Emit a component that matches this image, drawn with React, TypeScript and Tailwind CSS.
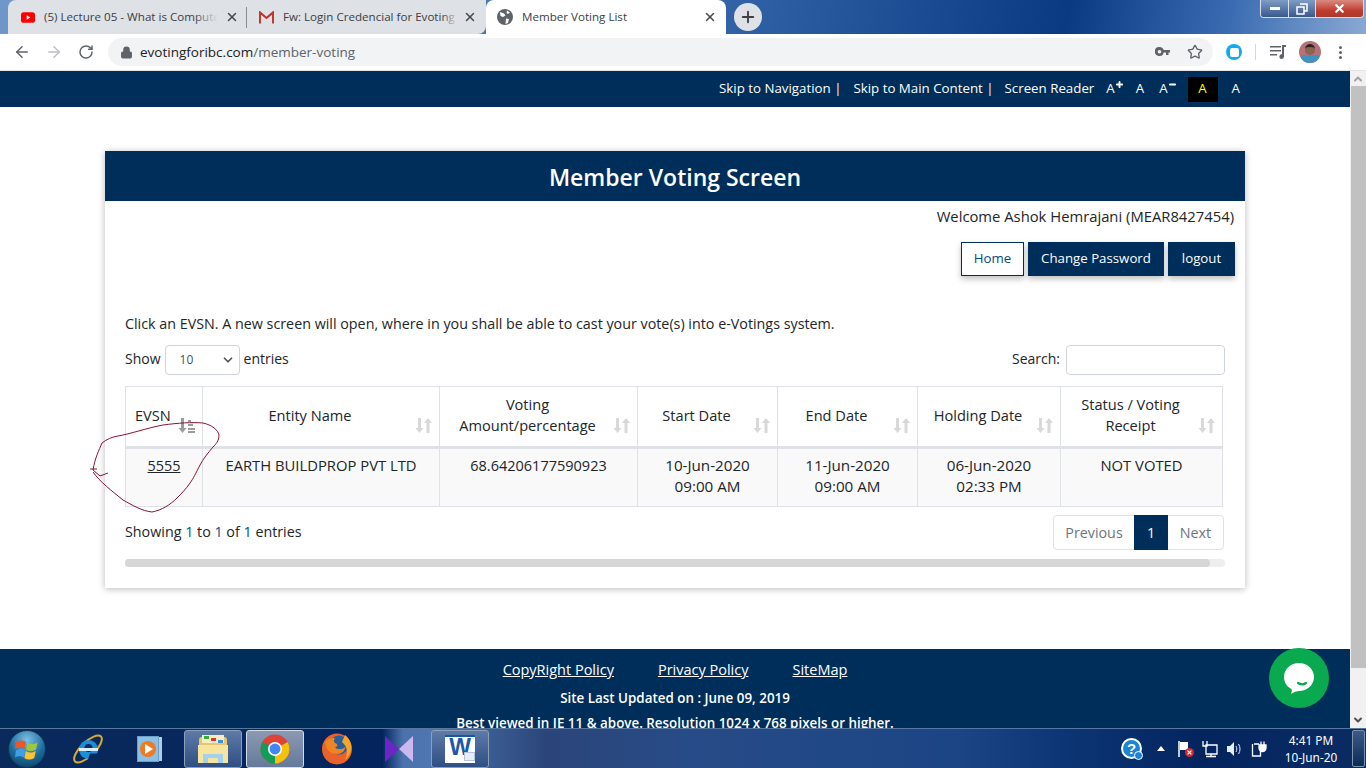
import React from 'react';
import { ArrowLeft, ArrowRight, RotateCw, Lock, Star, Plus, X, ChevronDown, ChevronUp, Minus } from 'lucide-react';

const FONT = "font-['Open_Sans','Noto_Sans',sans-serif]";

const SortIcon = ({ active }: { active?: boolean }) => (
  <span className={`absolute right-[7px] bottom-[12px] ${active ? 'text-[#9c9c9c]' : 'text-[#d8d8d8]'}`}>
    <svg width="17" height="17" viewBox="0 0 17 17" fill="currentColor" className="block">
      <path d="M3 1h3v10h2.500L4.500 16 .5 11H3z" />
      {active ? (
        <path d="M10 3h3v2h-3zM10 7h5v2h-5zM10 11h7v2h-7zM10 14h7v2h-7z" />
      ) : (
        <path d="M13 1l4 5h-2.500v10h-3V6H9z" />
      )}
    </svg>
  </span>
);

const COLS = ['w-[77px]', 'w-[237px]', 'w-[198px]', 'w-[140px]', 'w-[140px]', 'w-[143px]', 'w-[162px]'];

const HEADERS = ['EVSN', 'Entity Name', 'Voting Amount/percentage', 'Start Date', 'End Date', 'Holding Date', 'Status / Voting Receipt'];

const ROW: { cell: React.ReactNode; size: string }[] = [
  { cell: <a className="underline text-[#212529]">5555</a>, size: 'text-[14.400px]' },
  { cell: 'EARTH BUILDPROP PVT LTD', size: 'text-[14.800px]' },
  { cell: '68.64206177590923', size: 'text-[14.500px]' },
  { cell: <>10-Jun-2020<br />09:00 AM</>, size: 'text-[15.200px]' },
  { cell: <>11-Jun-2020<br />09:00 AM</>, size: 'text-[15.200px]' },
  { cell: <>06-Jun-2020<br />02:33 PM</>, size: 'text-[15.200px]' },
  { cell: 'NOT VOTED', size: 'text-[14.800px]' },
];

const ChromeLogo = () => (
  <svg width="30" height="32" viewBox="0 0 32 32">
    <circle cx="16" cy="16" r="15.500" fill="#db4437" />
    <path d="M16 16 L29.500 8.500 A15.500 15.500 0 0 1 16 31.500z" fill="#f4c20d" />
    <path d="M16 16 L16 31.500 A15.500 15.500 0 0 1 2.500 8.500z" fill="#0f9d58" />
    <circle cx="16" cy="16" r="7.500" fill="#fff" />
    <circle cx="16" cy="16" r="5.800" fill="#4285f4" />
  </svg>
);

const TaskButton = ({ children, bright }: { children: React.ReactNode; bright?: boolean }) => (
  <div className={`w-[58px] h-[38px] rounded-[3px] border flex items-center justify-center ${bright ? 'border-[#d5dce6] bg-[linear-gradient(180deg,#8b9ab3,#66799a)]' : 'border-[#8d9fb9] bg-[linear-gradient(180deg,#5d7aa8,#2f4f83)]'}`}>
    {children}
  </div>
);

const Taskbar = () => (
  <div className="h-[40px] shrink-0 flex items-center border-t border-[#5a789f] bg-[linear-gradient(90deg,#0a2a5c_0%,#04245e_27%,#04245e_28%,#4b72ad_29.500%,#4f76b0_31.500%,#3a5c92_36%,#2b4579_40%,#274b87_50%,#1c4585_70%,#0c3575_78%,#04245e_88%,#0a2c63_100%)]">
    {/* start orb */}
    <div className="ml-[8px] w-[38px] h-[38px] rounded-full bg-[radial-gradient(circle_at_50%_25%,#7cc0e2,#1b6a9e_55%,#0a3656)] border border-[#16364f] flex items-center justify-center">
      <svg width="24" height="22" viewBox="0 0 24 22">
        <path d="M1 4c3-2 7-2 10 0l-1.500 7c-3-2-6-2-9.500 0z" fill="#e9572b" />
        <path d="M12.500 4.500c3 2 6 2 10 0L21 11.500c-4 2-7 2-10 0z" fill="#9cc83c" />
        <path d="M0 12.500c3.500-2 6-2 9.500 0L8 19.500c-3-2-6-2-9 0z" transform="translate(1)" fill="#3ea0e4" />
        <path d="M10.800 13c3 2 6 2 10 0l-1.500 7c-4 2-7 2-10 0z" fill="#fcc22f" />
      </svg>
    </div>
    {/* IE */}
    <div className="ml-[26px] w-[32px] flex justify-center">
      <svg width="32" height="32" viewBox="0 0 32 32">
        <ellipse cx="16" cy="16" rx="18" ry="7" fill="none" stroke="#d9a92f" strokeWidth="2" transform="rotate(-44 16 16)" />
        <circle cx="16.500" cy="16.500" r="9.500" fill="#1c8ed8" />
        <circle cx="16.500" cy="15" r="4" fill="#0a2a5c" />
        <rect x="7" y="15" width="19" height="3" fill="#d9f0fb" />
        <path d="M18 20.500h8.500L24 26l-8 .5z" fill="#0a2a5c" />
      </svg>
    </div>
    {/* media player */}
    <div className="ml-[33px] w-[26px] h-[26px] flex">
      <div className="w-[22px] h-[26px] bg-[#8dbfe4] border border-[#6ca0c8] flex items-center justify-center">
        <div className="w-[16px] h-[16px] rounded-full bg-[#ee7a22] flex items-center justify-center">
          <div className="w-0 h-0 border-y-[5px] border-y-transparent border-l-[8px] border-l-white ml-[2px]" />
        </div>
      </div>
      <div className="w-[3px] h-[24px] mt-[1px] bg-[#a9cfea]" />
    </div>
    {/* explorer */}
    <div className="ml-[21px]">
      <TaskButton>
        <svg width="32" height="32" viewBox="0 0 32 32">
          <path d="M2 7c0-2 1-3 3-3h22c2 0 3 1 3 3v22H2z" fill="#e6c670" />
          <rect x="5" y="2" width="22" height="8" fill="#f8ecc0" />
          <rect x="7" y="3" width="5" height="3" fill="#35b13a" />
          <rect x="14" y="5" width="5" height="3" fill="#d2392f" />
          <rect x="21" y="7" width="5" height="3" fill="#3a8fe0" />
          <path d="M1 12h30v18H1z" fill="#f7e49f" />
          <path d="M6 21h20v9h-5v-5H11v5H6z" fill="#a3d3ea" />
        </svg>
      </TaskButton>
    </div>
    {/* chrome */}
    <div className="ml-[4px]">
      <TaskButton bright><ChromeLogo /></TaskButton>
    </div>
    {/* firefox */}
    <div className="ml-[18px] w-[30px] flex justify-center">
      <svg width="30" height="32" viewBox="0 0 30 32">
        <ellipse cx="15" cy="16" rx="15" ry="15.500" fill="#e8622a" />
        <circle cx="17" cy="12" r="9.500" fill="#27609f" />
        <path d="M23 2c5 4 7 9 6 15-1 4-3 8-6 10 3-6 3-13-3-18z" fill="#f6a623" />
        <path d="M3 9c1 8 5 12 12 12 5 0 8-3 8-7-3 3-8 3-10 0 2 0 3-2 2-3-3-1-4-3-2-6C8 5 5 6 3 9z" fill="#f08423" />
      </svg>
    </div>
    {/* visual studio */}
    <div className="ml-[33px] w-[28px] flex justify-center">
      <svg width="28" height="26" viewBox="0 0 28 26">
        <path d="M0 0l14 13L0 26z" fill="#6a26c4" />
        <path d="M28 0L14 13l14 13z" fill="#cbb8f0" />
      </svg>
    </div>
    {/* word */}
    <div className="ml-[18px]">
      <TaskButton>
        <div className="relative w-[30px] h-[28px] bg-white flex justify-center border-t-2 border-[#1a56a8]">
          <span className="text-[#1d57a8] text-[23px] leading-[20px] font-bold font-['Liberation_Sans',sans-serif]">W</span>
          <div className="absolute right-0 bottom-[2px] w-[11px] h-[9px] bg-[#e8edf5] border border-[#b6c4d8]" />
        </div>
      </TaskButton>
    </div>

    {/* tray */}
    <div className="ml-auto flex items-center">
      <div className="relative w-[21px] h-[21px] rounded-full bg-[#1b84d6] border-2 border-white flex items-center justify-center text-white text-[15px] font-bold leading-none font-['Liberation_Sans',sans-serif]">
        ?
        <span className="absolute -right-[3px] -bottom-[3px] w-[9px] h-[9px] rounded-full bg-[#1b84d6] border border-white" />
      </div>
      <div className="ml-[15px] w-0 h-0 border-x-[4px] border-x-transparent border-b-[5px] border-b-white" />
      <svg className="ml-[12px]" width="18" height="18" viewBox="0 0 18 18">
        <path d="M2 1v16" stroke="#fff" strokeWidth="1.500" />
        <path d="M3 2h8v8H3z" fill="#fff" />
        <circle cx="12.500" cy="12.500" r="4.500" fill="#d8262c" />
        <path d="M10.600 10.600l3.800 3.800M14.400 10.600l-3.800 3.800" stroke="#fff" strokeWidth="1.300" />
      </svg>
      <svg className="ml-[7px]" width="16" height="18" viewBox="0 0 16 18" fill="none" stroke="#fff" strokeWidth="1.300">
        <path d="M4 5h11v9H4zM1 1v5h4V1M9 14v2M4 16.500h10" />
      </svg>
      <svg className="ml-[8px]" width="16" height="18" viewBox="0 0 16 18">
        <path d="M1 6h3l4-4v14l-4-4H1z" fill="#e8eef6" />
        <path d="M10 6c1 2 1 4 0 6M12.500 4c2 3 2 7 0 10" stroke="#e8eef6" fill="none" />
      </svg>
      <svg className="ml-[9px]" width="16" height="18" viewBox="0 0 16 18" fill="none" stroke="#fff" strokeWidth="1.300">
        <path d="M3 4h5M1.500 4v12h8v-6" />
        <path d="M8 5h7v3a3.500 3.500 0 0 1-7 0zM10 1.500V5M13 1.500V5" fill="#fff" />
      </svg>
      <div className="ml-[14px] w-[60px] text-center text-white text-[11.800px] leading-[17px] font-['Noto_Sans',sans-serif]">
        <div>4:41 PM</div>
        <div>10-Jun-20</div>
      </div>
      <div className="ml-[11px] mr-[1px] w-[13px] h-[37px] border border-[#7f93ad] rounded-[2px] bg-[linear-gradient(180deg,#3c5a85,#0d2b59)]" />
    </div>
  </div>
);

const Btn = ({ children, outline, width }: { children: React.ReactNode; outline?: boolean; width: string }) => (
  <span className={`h-[34px] ${width} flex items-center justify-center text-[13.250px] shadow-[0_3px_6px_rgba(0,0,0,0.25)] ${outline ? 'bg-white border border-[#002e5b] text-[#004a80]' : 'bg-[#002e5b] text-white'}`}>
    {children}
  </span>
);

export default function App() {
  return (
    <div className={`w-[1366px] h-[768px] overflow-hidden flex flex-col bg-white relative ${FONT}`}>
      {/* tab strip */}
      <div className="h-[34px] shrink-0 flex items-stretch bg-[linear-gradient(100deg,#6f97c9_0%,#3f70b3_45%,#0a3a82_78%,#3b6cb2_90%,#8aa9d3_100%)]">
        <div className="w-[8px]" />
        <div className="w-[239px] bg-[#dee1e6] rounded-tl-[8px] flex items-center pl-[13px] pr-[8px] relative">
          <svg width="14" height="11" viewBox="0 0 16 12" className="shrink-0"><rect width="16" height="12" rx="3" fill="#f00" /><path d="M6.500 3.500v5l4-2.500z" fill="#fff" /></svg>
          <span className="relative ml-[9px] w-[174px] overflow-hidden whitespace-nowrap text-[11.600px] text-[#3c4043]">
            (5) Lecture 05 - What is Computer
            <span className="absolute right-0 top-0 bottom-0 w-[24px] bg-[linear-gradient(90deg,rgba(222,225,230,0),#dee1e6)]" />
          </span>
          <X size={14} strokeWidth={2.500} className="ml-auto text-[#45484c] shrink-0" />
          <span className="absolute right-0 top-[7px] h-[21px] w-px bg-[#8a8d91]" />
        </div>
        <div className="w-[239px] bg-[#dee1e6] rounded-br-[8px] flex items-center pl-[12px] pr-[9px]">
          <svg width="15" height="13" viewBox="0 0 16 13" className="shrink-0"><path d="M1 13V1l7 6 7-6v12" fill="none" stroke="#c5352b" strokeWidth="2.200" /></svg>
          <span className="relative ml-[9px] w-[175px] overflow-hidden whitespace-nowrap text-[11.600px] text-[#3c4043]">
            Fw: Login Credencial for Evoting
            <span className="absolute right-0 top-0 bottom-0 w-[16px] bg-[linear-gradient(90deg,rgba(222,225,230,0),#dee1e6)]" />
          </span>
          <X size={14} strokeWidth={2.500} className="ml-auto text-[#45484c] shrink-0" />
        </div>
        <div className="w-[240px] bg-white rounded-t-[8px] flex items-center pl-[11px] pr-[9px]">
          <svg width="16" height="16" viewBox="0 0 16 16" className="shrink-0">
            <circle cx="8" cy="8" r="8" fill="#5f6368" />
            <path d="M3 3l4 1.500 1.500 2L6 8 3.500 7zM9 9.500l3 .5-1 4-2.500 1zM10 1.500l3 2-2 1.500-1.500-1z" fill="#fff" />
          </svg>
          <span className="ml-[9px] text-[11.600px] text-[#3c4043]">Member Voting List</span>
          <X size={14} strokeWidth={2.500} className="ml-auto text-[#45484c]" />
        </div>
        <div className="ml-[8px] mt-[3px] w-[28px] h-[28px] rounded-full bg-[#dee1e6] flex items-center justify-center">
          <Plus size={18} strokeWidth={2.500} className="text-[#3c4043]" />
        </div>
        <div className="ml-auto mr-[2px] h-[18px] w-[104px] flex rounded-b-[4px] border border-t-0 border-[#d8dfea] overflow-hidden">
          <div className="w-[28px] flex items-center justify-center border-r border-[#d8dfea] bg-[linear-gradient(180deg,#7e9cc4,#39598d)]">
            <span className="w-[10px] h-[3px] bg-white" />
          </div>
          <div className="w-[27px] flex items-center justify-center border-r border-[#d8dfea] bg-[linear-gradient(180deg,#7e9cc4,#39598d)]">
            <svg width="12" height="12" viewBox="0 0 12 12" fill="none" stroke="#fff" strokeWidth="1.500"><path d="M4 1h7v7H8M1 4h7v7H1z" /></svg>
          </div>
          <div className="flex-1 flex items-center justify-center bg-[linear-gradient(180deg,#d98a80,#c03a2b_65%,#a93a30)]">
            <X size={13} strokeWidth={4} className="text-white" />
          </div>
        </div>
      </div>

      {/* address bar */}
      <div className="h-[37px] shrink-0 flex items-center bg-white border-b border-[#e3e5e8]">
        <ArrowLeft size={18} className="ml-[13px] text-[#5f6368]" />
        <ArrowRight size={18} className="ml-[14px] text-[#bdc0c4]" />
        <RotateCw size={16} strokeWidth={2.200} className="ml-[15px] text-[#5f6368]" />
        <div className="ml-[14px] w-[1105px] h-[28px] rounded-full bg-[#f1f3f4] flex items-center pl-[12px] pr-[10px]">
          <Lock size={13} fill="#5f6368" className="text-[#5f6368]" />
          <span className="ml-[7px] text-[13.500px] text-[#202124]">evotingforibc.com<span className="text-[#5f6368]">/member-voting</span></span>
          <svg className="ml-auto" width="15" height="10" viewBox="0 0 15 10" fill="#5f6368">
            <path d="M4.500 0a4.500 4.500 0 0 1 4.200 3H15v2.500h-1.500V8H11V5.500H8.700A4.500 4.500 0 1 1 4.500 0zm0 3a1.800 1.800 0 1 0 0 3.600 1.800 1.800 0 0 0 0-3.600z" />
          </svg>
          <Star size={16} className="ml-[17px] text-[#5f6368]" />
        </div>
        <div className="ml-[13px] w-[16px] h-[16px] rounded-full bg-[#13a9f2] flex items-center justify-center">
          <div className="w-[9px] h-[9px] rounded-[2px] bg-white" />
        </div>
        <div className="ml-[13px] w-px h-[16px] bg-[#d5d7da]" />
        <svg className="ml-[14px]" width="16" height="14" viewBox="0 0 16 14" fill="#5f6368">
          <path d="M0 1h11v1.500H0zM0 5h11v1.500H0zM0 9h7v1.500H0zM12 0h4v2h-2v9.500a2.300 2.300 0 1 1-2-2.200z" />
        </svg>
        <div className="ml-[13px] w-[22px] h-[22px] rounded-full bg-[#b5707a] flex flex-col items-center overflow-hidden">
          <div className="mt-[3px] w-[10px] h-[11px] rounded-full bg-[#8a6450] border-t-[3px] border-[#2e2420]" />
          <div className="w-[18px] h-[8px] bg-[#3f92bf]" />
        </div>
        <div className="ml-[18px] flex flex-col gap-[2px]">
          <span className="w-[3px] h-[3px] rounded-full bg-[#5f6368]" />
          <span className="w-[3px] h-[3px] rounded-full bg-[#5f6368]" />
          <span className="w-[3px] h-[3px] rounded-full bg-[#5f6368]" />
        </div>
      </div>

      {/* page viewport */}
      <div className="flex-1 min-h-0 flex relative">
        <div className="w-[1350px] overflow-hidden flex flex-col">
          <div className="h-[36px] shrink-0 bg-[#002e5b] flex items-center justify-end text-white text-[13.300px] pr-[110px]">
            <span>Skip to Navigation |</span>
            <span className="ml-[12px]">Skip to Main Content |</span>
            <span className="ml-[11px]">Screen Reader</span>
            <span className="ml-[12px] flex items-start">A<Plus size={9} strokeWidth={5} className="mt-[1px]" /></span>
            <span className="ml-[12px]">A</span>
            <span className="ml-[15px] flex items-start">A<Minus size={9} strokeWidth={5} className="mt-[1px]" /></span>
            <span className="ml-[11px] w-[30px] h-[25px] bg-black text-[#ffff00] flex items-center justify-center">A</span>
            <span className="ml-[14px]">A</span>
          </div>

          <div className="shrink-0 pt-[44px] pb-[61px] pl-[105px]">
            <div className="relative w-[1140px] h-[437px] bg-white shadow-[0_1px_7px_rgba(0,0,0,0.28)] text-[#212529] text-[14.300px]">
              <div className="h-[50px] pt-[2px] bg-[#002e5b] flex items-center justify-center text-white text-[23px] font-semibold">
                Member Voting Screen
              </div>
              <div className="pt-[5px] pr-[11px] text-right leading-[20px] text-[14.800px]">Welcome Ashok Hemrajani (MEAR8427454)</div>
              <div className="mt-[16px] pr-[10px] flex justify-end gap-[4px]">
                <Btn outline width="w-[63px]">Home</Btn>
                <Btn width="w-[136px]">Change Password</Btn>
                <Btn width="w-[67px]">logout</Btn>
              </div>
              <p className="mt-[38px] pl-[20px] leading-[20px]">Click an EVSN. A new screen will open, where in you shall be able to cast your vote(s) into e-Votings system.</p>
              <div className="mt-[11px] px-[20px] flex items-center justify-between h-[30px]">
                <div className="flex items-center">
                  <span className="pb-[3px] text-[14px]">Show</span>
                  <div className="ml-[4px] w-[75px] h-[30px] rounded-[4px] border border-[#ced4da] flex items-center justify-between pl-[14px] pr-[4px] text-[12px] text-[#495057]">
                    10
                    <ChevronDown size={14} strokeWidth={3} className="text-[#555]" />
                  </div>
                  <span className="ml-[4px] pb-[3px] text-[14px]">entries</span>
                </div>
                <div className="flex items-center">
                  <span className="pb-[3px] text-[14px]">Search:</span>
                  <div className="ml-[6px] w-[159px] h-[30px] rounded-[4px] border border-[#ced4da]" />
                </div>
              </div>

              <table className="mt-[11px] ml-[20px] w-[1097px] table-fixed border-collapse text-[14.600px]">
                <thead>
                  <tr className="h-[61px]">
                    {HEADERS.map((h, i) => (
                      <th key={h} className={`${COLS[i]} relative border border-[#dee2e6] border-b-[3px] font-medium align-middle pb-[3px] leading-[21px] ${i === 0 ? 'text-left pl-[9px]' : 'text-center pl-[8px] pr-[30px]'}`}>
                        {h}
                        <SortIcon active={i === 0} />
                      </th>
                    ))}
                  </tr>
                </thead>
                <tbody>
                  <tr className="h-[59px] bg-[#f9f9f9]">
                    {ROW.map((c, i) => (
                      <td key={i} className={`border border-[#dee2e6] text-center align-top pt-[6px] leading-[21px] ${c.size}`}>{c.cell}</td>
                    ))}
                  </tr>
                </tbody>
              </table>

              <div className="mt-[8px] pl-[20px] pr-[21px] flex items-center justify-between">
                <span className="pb-[2px]">Showing <span className="text-[#0b4f8a]">1</span> to <span className="text-[#0b4f8a]">1</span> of <span className="text-[#0b4f8a]">1</span> entries</span>
                <div className="flex h-[35px] rounded-[4px] border border-[#dee2e6] text-[#6c757d]">
                  <span className="w-[80px] flex items-center justify-center">Previous</span>
                  <span className="w-[34px] -my-px flex items-center justify-center bg-[#002e5b] text-white">1</span>
                  <span className="w-[55px] flex items-center justify-center">Next</span>
                </div>
              </div>

              <div className="mt-[9px] ml-[20px] w-[1100px] h-[8px] rounded-full bg-[#eeeeee]">
                <div className="w-[1085px] h-[8px] rounded-full bg-[#d6d6d6]" />
              </div>

              {/* hand-drawn annotation over the first cell */}
              <svg className="absolute left-[-20px] top-[265px]" width="140" height="105" viewBox="85 416 140 105" fill="none">
                <path d="M108 473 L100 476 L93 470 C95 458 99 450 102 443 C107 439 112 437 118 436 C130 434 147 428 163 425 C178 423 192 422 203 423 C212 425 218 430 219 435 C219 441 216 444 213 447 C208 453 203 459 200 465 C196 473 193 479 190 483 C186 489 181 494 177 498 C170 505 162 510 152 512 C142 511 132 505 123 500 C112 491 100 482 93 472 M90 469 L97 469" stroke="#8a1230" strokeWidth="1" />
              </svg>
            </div>
          </div>

          <div className="flex-1 bg-[#002e5b] text-white text-center overflow-hidden">
            <div className="pt-[11px] flex justify-center gap-[44px] text-[14.500px] leading-[20px] underline">
              <span>CopyRight Policy</span>
              <span>Privacy Policy</span>
              <span>SiteMap</span>
            </div>
            <div className="mt-[8px] text-[13.400px] font-semibold leading-[20px]">Site Last Updated on : June 09, 2019</div>
            <div className="mt-[5px] text-[13.400px] font-semibold leading-[20px]">Best viewed in IE 11 &amp; above. Resolution 1024 x 768 pixels or higher.</div>
          </div>
        </div>

        {/* scrollbar */}
        <div className="w-[16px] bg-[#f1f1f1] flex flex-col items-center">
          <ChevronUp size={12} strokeWidth={4} className="mt-[2px] text-[#a3a3a3]" />
          <div className="mt-[1px] w-full h-[582px] bg-[#c1c1c1] ml-[1px]" />
          <ChevronDown size={12} strokeWidth={4} className="mt-auto mb-[2px] text-[#505050]" />
        </div>

        {/* chat widget */}
        <div className="absolute left-[1269px] top-[577px] w-[60px] h-[60px] rounded-full bg-[#0aa84f] flex items-center justify-center">
          <svg width="30" height="31" viewBox="0 0 30 31">
            <path d="M15 0c8 0 15 6 15 14s-7 14-15 14c-2 0-5 1-8 3 1-2 1-3.500 .5-5C3 24 0 19 0 14 0 6 7 0 15 0z" fill="#fff" />
            <path d="M14 20c2.500 1.500 6 1.500 8 0" stroke="#0aa84f" strokeWidth="2.200" fill="none" strokeLinecap="round" />
          </svg>
        </div>
      </div>

      <Taskbar />
    </div>
  );
}
